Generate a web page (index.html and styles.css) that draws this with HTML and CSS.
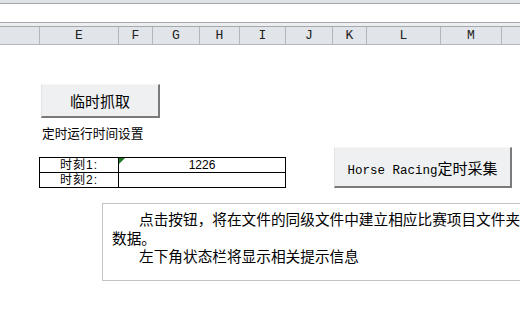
FILE: index.html
```html
<!DOCTYPE html>
<html lang="zh-CN">
<head>
    <meta charset="UTF-8">
    <title>Horse Racing 定时采集</title>
    <link rel="stylesheet" href="styles.css">
</head>
<body>
    <div class="ribbon-edge"></div>
    <div class="formula-bar"></div>
    <div class="bar-gap"></div>

    <div class="col-header">
        <div class="col col-pre"></div>
        <div class="col col-e">E</div>
        <div class="col col-f">F</div>
        <div class="col col-g">G</div>
        <div class="col col-h">H</div>
        <div class="col col-i">I</div>
        <div class="col col-j">J</div>
        <div class="col col-k">K</div>
        <div class="col col-l">L</div>
        <div class="col col-m">M</div>
        <div class="col col-n"></div>
    </div>

    <div class="sheet">
        <button class="shape-btn grab-btn">临时抓取</button>
        <div class="caption">定时运行时间设置</div>

        <div class="time-row">
            <div class="times">
                <div class="cell label">时刻1:</div>
                <div class="cell value"><span class="flag"></span>1226</div>
                <div class="cell label last">时刻2:</div>
                <div class="cell value last"></div>
            </div>
            <button class="shape-btn collect-btn"><span class="latin">Horse Racing</span>定时采集</button>
        </div>

        <div class="note">
            <p class="para">点击按钮，将在文件的同级文件中建立相应比赛项目文件夹<br>数据。</p>
            <p class="para">左下角状态栏将显示相关提示信息</p>
        </div>
    </div>
</body>
</html>
```

FILE: styles.css
```css
body {
    margin: 0;
    width: 520px;
    height: 314px;
    overflow: hidden;
    background: #fff;
    font-family: "Noto Sans CJK SC", "Liberation Sans", sans-serif;
    color: #000;
}

/* window chrome above the grid */
.ribbon-edge {
    height: 3px;
    background: #dfe3e8;
    border-bottom: 1px solid #a5a9ae;
}

.formula-bar {
    height: 18px;
    background: #fff;
    border-bottom: 1px solid #a5a9ae;
}

.bar-gap {
    height: 3px;
    background: #eceef0;
    border-bottom: 1px solid #a5a9ae;
}

/* column letters */
.col-header {
    display: flex;
    height: 17px;
    background: #e1e4e8;
    border-bottom: 1px solid #b3b6ba;
}

.col {
    box-sizing: border-box;
    flex: none;
    border-right: 1px solid #b3b6ba;
    font-family: "Liberation Mono", monospace;
    font-size: 13px;
    line-height: 17px;
    text-align: center;
    color: #222;
}

.col-pre { width: 40px; }
.col-e { width: 79px; }
.col-f { width: 34px; }
.col-g { width: 47px; }
.col-h { width: 40px; }
.col-i { width: 46px; }
.col-j { width: 47px; }
.col-k { width: 34px; }
.col-l { width: 74px; }
.col-m { width: 61px; }
.col-n { flex: 1; border-right: 0; }

/* sheet body */
.sheet {
    display: flex;
    flex-direction: column;
    align-items: flex-start;
}

.shape-btn {
    box-sizing: border-box;
    margin: 0;
    padding: 0;
    background: #eff0f2;
    border-top: 1px solid #f6f6f6;
    border-left: 1px solid #e2e2e2;
    border-right: 2px solid #7a7a7a;
    border-bottom: 2px solid #7a7a7a;
    font-family: "Noto Sans CJK SC", sans-serif;
    font-size: 15px;
    color: #000;
    white-space: nowrap;
}

.grab-btn {
    width: 119px;
    height: 34px;
    margin: 39px 0 0 41px;
}

.caption {
    margin: 7px 0 0 42px;
    font-size: 12.7px;
    line-height: 16px;
}

.time-row {
    display: flex;
    align-items: flex-end;
    margin: 6px 0 0 39px;
}

.times {
    display: grid;
    grid-template-columns: 79px 166px;
    grid-template-rows: 15px 14px;
    border: 1px solid #000;
}

.cell {
    position: relative;
    font-family: "Liberation Sans", "Noto Sans CJK SC", sans-serif;
    font-size: 12px;
    line-height: 15px;
    text-align: center;
    border-bottom: 1px solid #000;
}

.cell.label {
    border-right: 1px solid #000;
    letter-spacing: 1px;
}

.cell.last {
    border-bottom: 0;
    line-height: 14px;
}

.flag {
    position: absolute;
    top: 0;
    left: 0;
    width: 0;
    height: 0;
    border-top: 6px solid #1e7a1e;
    border-right: 6px solid transparent;
}

.collect-btn {
    width: 178px;
    height: 41px;
    margin-left: 48px;
}

.latin {
    font-family: "Liberation Mono", monospace;
    font-size: 12.5px;
}

.note {
    box-sizing: border-box;
    width: 460px;
    height: 78px;
    margin: 15px 0 0 102px;
    padding: 6px 0 0 9px;
    border: 1px solid #c4c4c4;
    font-size: 14.67px;
    line-height: 18.5px;
    white-space: nowrap;
}

.para {
    margin: 0;
    text-indent: 27px;
}
```
